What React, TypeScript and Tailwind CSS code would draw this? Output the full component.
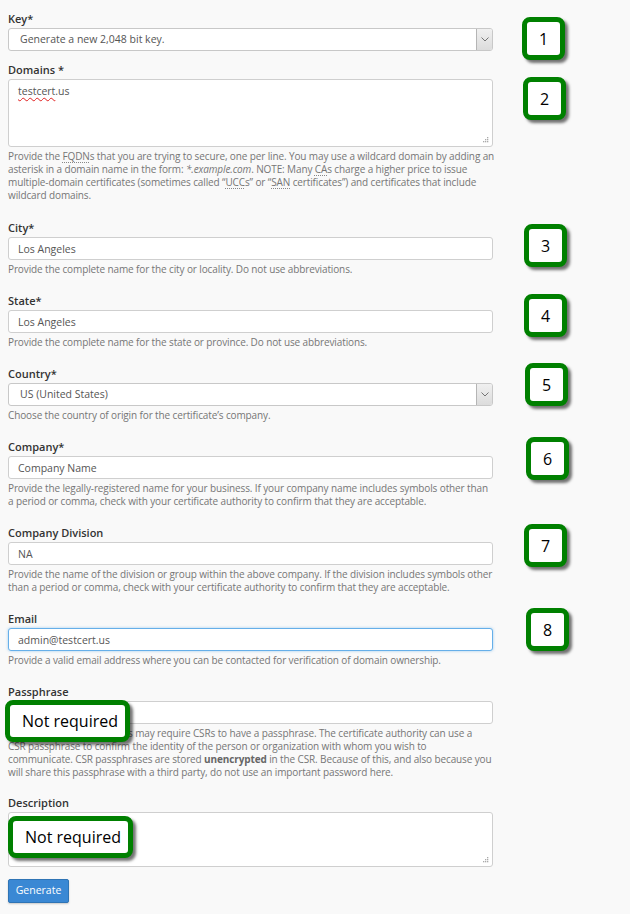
import React from "react"

const font = { fontFamily: '"Open Sans", "Liberation Sans", sans-serif' }

function Abbr({ children }: { children: React.ReactNode }) {
  return <span className="underline decoration-dotted decoration-[#888] underline-offset-2">{children}</span>
}

function Label({ children }: { children: React.ReactNode }) {
  return <div className="text-[11px] leading-[15px] font-semibold text-[#333] mb-[2px]">{children}</div>
}

function Help({ lines }: { lines: React.ReactNode[] }) {
  return (
    <div className="mt-[3px] text-[10px] leading-[13px] tracking-[-0.12px] text-[#767676]">
      {lines.map((l, i) => (
        <div key={i} className="whitespace-nowrap">
          {l}
        </div>
      ))}
    </div>
  )
}

function TextInput({ value, focused }: { value: string; focused?: boolean }) {
  return (
    <input
      readOnly
      value={value}
      className={
        focused
          ? "block w-full h-[23px] px-[9px] text-[10.5px] text-[#555] bg-white rounded-[3px] border border-[#66afe9] shadow-[0_0_3px_rgba(102,175,233,0.6)] outline-none"
          : "block w-full h-[23px] px-[9px] text-[10.5px] text-[#555] bg-white rounded-[3px] border border-[#cfcfcf] outline-none"
      }
    />
  )
}

function Select({ value }: { value: string }) {
  return (
    <div className="flex h-[23px] w-full bg-white rounded-[3px] border border-[#c8c8c8] overflow-hidden">
      <div className="flex-1 flex items-center pl-[11px] text-[10.5px] text-[#555]">{value}</div>
      <div className="w-[16px] flex items-center justify-center border-l border-[#b5b5b5] bg-gradient-to-b from-[#f0f0f0] to-[#dcdcdc]">
        <svg width="8" height="5" viewBox="0 0 8 5" fill="none">
          <path d="M0.5 0.5 L4 4 L7.5 0.5" stroke="#666" strokeWidth="0.9" />
        </svg>
      </div>
    </div>
  )
}

function Area({ height, children }: { height: string; children?: React.ReactNode }) {
  return (
    <div className={"relative w-full bg-white rounded-[3px] border border-[#cfcfcf] " + height}>
      {children}
      <svg className="absolute right-[3px] bottom-[3px]" width="7" height="7" viewBox="0 0 7 7">
        <rect x="5" y="1" width="1.3" height="1.3" fill="#aaa" />
        <rect x="3" y="3" width="1.3" height="1.3" fill="#aaa" />
        <rect x="5" y="3" width="1.3" height="1.3" fill="#aaa" />
        <rect x="1" y="5" width="1.3" height="1.3" fill="#aaa" />
        <rect x="3" y="5" width="1.3" height="1.3" fill="#aaa" />
        <rect x="5" y="5" width="1.3" height="1.3" fill="#aaa" />
      </svg>
    </div>
  )
}

function Callout({ n, className }: { n: string; className: string }) {
  return (
    <div
      className={
        "absolute w-[43px] h-[43px] rounded-[8px] border-[5px] border-[#008000] bg-white flex items-center justify-center text-[16px] text-black shadow-[3px_3px_3px_rgba(0,0,0,0.55)] " +
        className
      }
    >
      {n}
    </div>
  )
}

function NoteBox({ className }: { className: string }) {
  return (
    <div
      className={
        "absolute w-[125px] h-[42px] rounded-[8px] border-[5px] border-[#008000] bg-white flex items-center pl-[12px] text-[16px] text-black shadow-[3px_3px_3px_rgba(0,0,0,0.55)] " +
        className
      }
    >
      Not required
    </div>
  )
}

export default function App() {
  return (
    <div className="relative w-[630px] min-h-[914px] bg-[#f9f9f9] pt-[11px]" style={font}>
      <div className="w-[485px] ml-[8px]">
        {/* Key */}
        <div className="mb-[11px]">
          <Label>Key*</Label>
          <Select value="Generate a new 2,048 bit key." />
        </div>

        {/* Domains */}
        <div className="mb-[18px]">
          <Label>Domains *</Label>
          <Area height="h-[68px]">
            <div className="absolute left-[9px] top-[4px] text-[10.5px] text-[#555]">
              <span className="underline decoration-wavy decoration-[#e02020] decoration-[1px] underline-offset-[2px]">testcert</span>.us
            </div>
          </Area>
          <Help
            lines={[
              <>Provide the <Abbr>FQDN</Abbr>s that you are trying to secure, one per line. You may use a wildcard domain by adding an</>,
              <>asterisk in a domain name in the form: <i>*.example.com</i>. NOTE: Many <Abbr>CA</Abbr>s charge a higher price to issue</>,
              <>multiple-domain certificates (sometimes called “<Abbr>UCC</Abbr>s” or “<Abbr>SAN</Abbr> certificates”) and certificates that include</>,
              <>wildcard domains.</>,
            ]}
          />
        </div>

        <div className="mb-[17px]">
          <Label>City*</Label>
          <TextInput value="Los Angeles" />
          <Help lines={["Provide the complete name for the city or locality. Do not use abbreviations."]} />
        </div>

        <div className="mb-[17px]">
          <Label>State*</Label>
          <TextInput value="Los Angeles" />
          <Help lines={["Provide the complete name for the state or province. Do not use abbreviations."]} />
        </div>

        <div className="mb-[17px]">
          <Label>Country*</Label>
          <Select value="US (United States)" />
          <Help lines={["Choose the country of origin for the certificate’s company."]} />
        </div>

        <div className="mb-[17px]">
          <Label>Company*</Label>
          <TextInput value="Company Name" />
          <Help
            lines={[
              "Provide the legally-registered name for your business. If your company name includes symbols other than",
              "a period or comma, check with your certificate authority to confirm that they are acceptable.",
            ]}
          />
        </div>

        <div className="mb-[17px]">
          <Label>Company Division</Label>
          <TextInput value="NA" />
          <Help
            lines={[
              "Provide the name of the division or group within the above company. If the division includes symbols other",
              "than a period or comma, check with your certificate authority to confirm that they are acceptable.",
            ]}
          />
        </div>

        <div className="mb-[17px]">
          <Label>Email</Label>
          <TextInput value="admin@testcert.us" focused />
          <Help lines={["Provide a valid email address where you can be contacted for verification of domain ownership."]} />
        </div>

        <div className="mb-[16px]">
          <Label>Passphrase</Label>
          <TextInput value="" />
          <Help
            lines={[
              "Some certificate authorities may require CSRs to have a passphrase. The certificate authority can use a",
              "CSR passphrase to confirm the identity of the person or organization with whom you wish to",
              <>communicate. CSR passphrases are stored <b className="font-bold text-[#666]">unencrypted</b> in the CSR. Because of this, and also because you</>,
              "will share this passphrase with a third party, do not use an important password here.",
            ]}
          />
        </div>

        <div className="mb-[12px]">
          <Label>Description</Label>
          <Area height="h-[55px]" />
        </div>

        <button className="block h-[24px] w-[61px] bg-[#3a88d4] border border-[#2f74b5] rounded-[2px] text-white text-[10.5px] shadow-[0_1px_2px_rgba(0,0,0,0.2)]">
          Generate
        </button>
      </div>

      <Callout n="1" className="left-[522px] top-[17px]" />
      <Callout n="2" className="left-[523px] top-[77px]" />
      <Callout n="3" className="left-[524px] top-[224px]" />
      <Callout n="4" className="left-[524px] top-[294px]" />
      <Callout n="5" className="left-[525px] top-[363px]" />
      <Callout n="6" className="left-[526px] top-[437px]" />
      <Callout n="7" className="left-[524px] top-[524px]" />
      <Callout n="8" className="left-[526px] top-[608px]" />

      <NoteBox className="left-[5px] top-[700px]" />
      <NoteBox className="left-[8px] top-[816px]" />
    </div>
  )
}
